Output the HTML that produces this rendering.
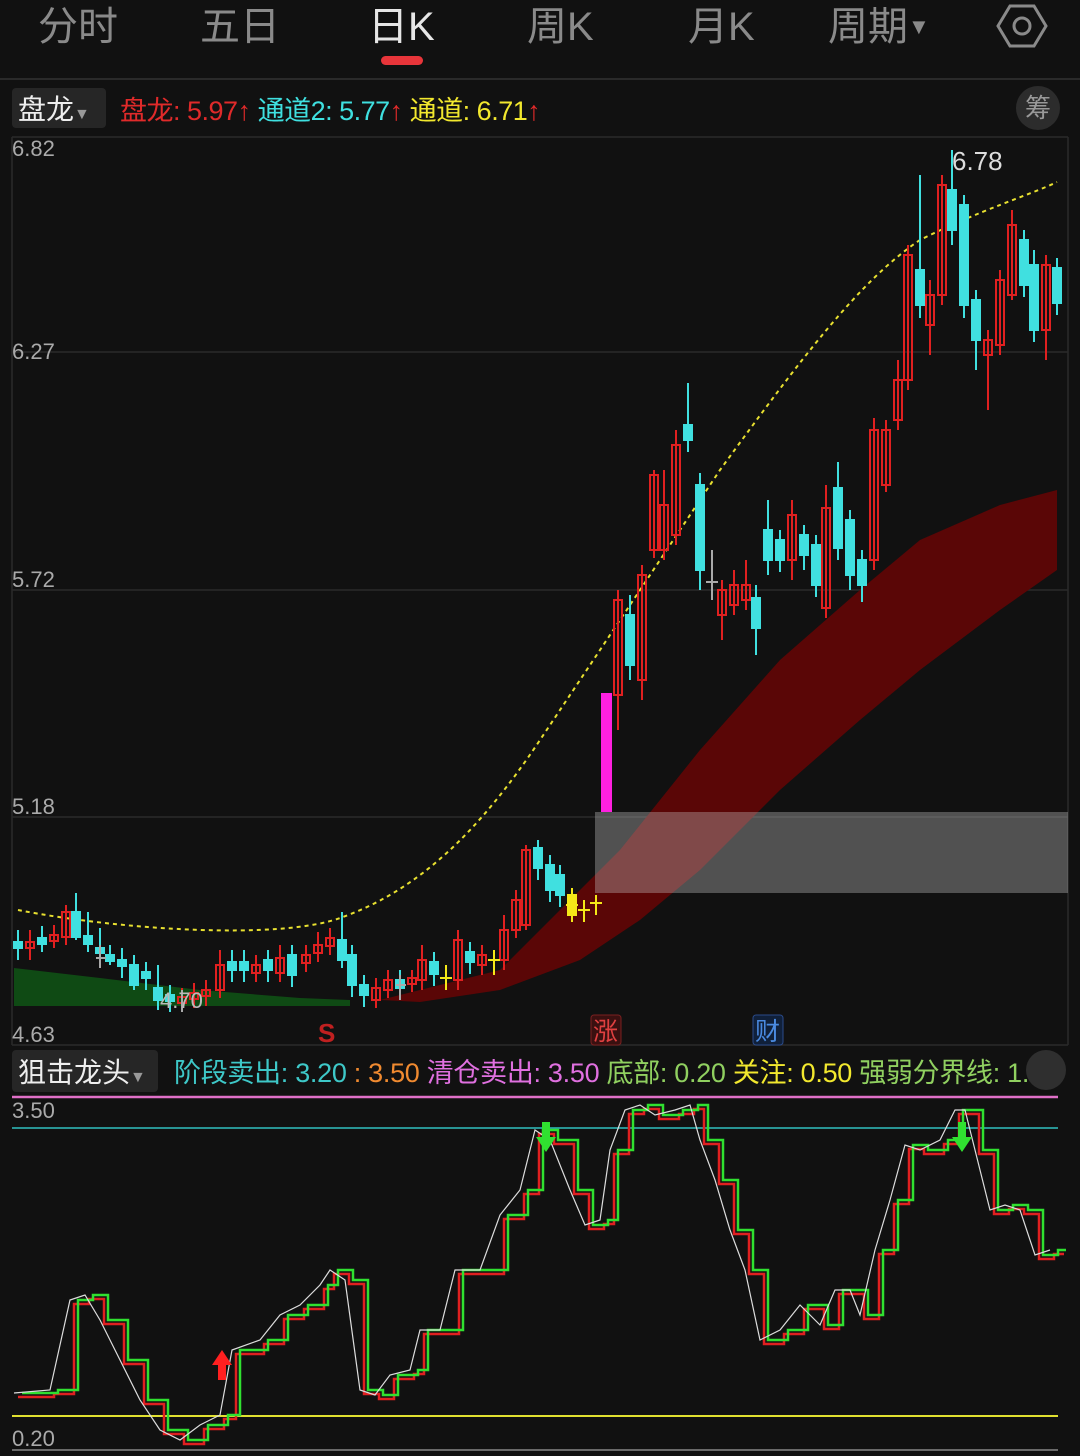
<!DOCTYPE html>
<html><head><meta charset="utf-8"><style>
body{margin:0;background:#0f0f0f;width:1080px;height:1456px;overflow:hidden;font-family:"Liberation Sans","Noto Sans CJK SC",sans-serif;}
.t{position:absolute;white-space:nowrap}
</style></head><body>
<div style="position:relative;width:1080px;height:1456px;background:#111">
<div class="t" style="left:38px;top:-6px;font-size:40px;color:#8a8a8a">分时</div>
<div class="t" style="left:200px;top:-6px;font-size:40px;color:#8a8a8a">五日</div>
<div class="t" style="left:368px;top:-6px;font-size:40px;color:#e6e6e6">日K</div>
<div style="position:absolute;left:381px;top:56px;width:42px;height:9px;border-radius:5px;background:#e8353a"></div>
<div class="t" style="left:527px;top:-6px;font-size:40px;color:#8a8a8a">周K</div>
<div class="t" style="left:688px;top:-6px;font-size:40px;color:#8a8a8a">月K</div>
<div class="t" style="left:828px;top:-6px;font-size:40px;color:#8a8a8a">周期<span style="font-size:22px;vertical-align:6px">▼</span></div>
<svg style="position:absolute;left:996px;top:2px" width="52" height="48"><polygon points="14,4 38,4 50,24 38,44 14,44 2,24" fill="none" stroke="#8a8a8a" stroke-width="3"/><circle cx="26" cy="24" r="8" fill="none" stroke="#8a8a8a" stroke-width="3"/></svg>
<div style="position:absolute;left:0;top:78px;width:1080px;height:2px;background:#2a2a2a"></div>
<div style="position:absolute;left:12px;top:88px;width:94px;height:40px;background:#262626;border-radius:4px"></div>
<div class="t" style="left:18px;top:88px;font-size:28px;color:#eee">盘龙<span style="font-size:16px;color:#999">▼</span></div>
<div class="t" style="left:120px;top:89px;font-size:27px;letter-spacing:-0.5px"><span style="color:#e02a2a">盘龙: 5.97</span><span style="color:#e02a2a">↑</span> <span style="color:#3fe0e0">通道2: 5.77</span><span style="color:#e02a2a">↑</span> <span style="color:#f2e82e">通道: 6.71</span><span style="color:#e02a2a">↑</span></div>
<div style="position:absolute;left:1016px;top:86px;width:44px;height:44px;border-radius:22px;background:#2c2c2c;color:#999;font-size:26px;text-align:center;line-height:44px">筹</div>

<svg style="position:absolute;left:0;top:0" width="1080" height="1456">
<g stroke="#2a2a2a" stroke-width="1.5"><line x1="12" y1="137" x2="1068" y2="137"/><line x1="12" y1="352" x2="1068" y2="352"/><line x1="12" y1="590" x2="1068" y2="590"/><line x1="12" y1="817" x2="1068" y2="817"/><line x1="12" y1="1045" x2="1068" y2="1045"/><line x1="12" y1="137" x2="12" y2="1045"/><line x1="1068" y1="137" x2="1068" y2="1045"/></g>
<polygon points="14,968 100,978 200,990 300,998 350,1000 350,1006 14,1006" fill="#0f4a14"/>
<polygon points="380,1000 500,970 560,910 620,850 700,750 780,660 860,590 920,540 1000,505 1057,490 1057,570 1000,610 920,670 860,720 780,790 700,870 640,920 580,960 500,990 420,1002" fill="#5a0606"/>
<rect x="595" y="812" width="473" height="81" fill="rgba(200,200,200,0.35)"/>
<path d="M18 910 C120 930 280 940 340 918 C420 890 480 830 540 740 C600 650 660 560 720 470 C800 360 860 280 920 240 C980 210 1030 195 1057 182" fill="none" stroke="#e8e030" stroke-width="2" stroke-dasharray="4,4"/>
<rect x="601" y="693" width="11" height="119" fill="#ff20e0"/>
<g stroke-width="2">
<g stroke="#40e0e0" fill="#40e0e0">
<path d="M18 930V960M42 926V952M76 893V940M88 912V952M100 928V967M110 945V965M122 948V978M134 955V990M146 962V990M158 965V1010M170 985V1012M232 950V982M244 950V982M268 950V982M292 945V987M342 912V968M352 945V997M364 975V1007M400 970V1000M434 952V986M470 942V974M538 840V880M550 855V902M560 865V907M630 595V680M688 383V452M700 473V590M756 585V655M768 500V575M780 530V572M804 525V570M816 535V597M838 462V560M850 510V590M862 550V602M920 175V318M952 150V245M964 195V318M976 290V370M1024 230V297M1034 250V342M1057 258V315"/>
<rect x="14" y="942" width="8" height="6"/><rect x="38" y="938" width="8" height="6"/><rect x="72" y="912" width="8" height="25"/><rect x="84" y="936" width="8" height="8"/><rect x="96" y="948" width="8" height="5"/><rect x="106" y="955" width="8" height="6"/><rect x="118" y="960" width="8" height="6"/><rect x="130" y="965" width="8" height="20"/><rect x="142" y="972" width="8" height="6"/><rect x="154" y="988" width="8" height="12"/><rect x="166" y="995" width="8" height="6"/><rect x="228" y="962" width="8" height="8"/><rect x="240" y="962" width="8" height="8"/><rect x="264" y="960" width="8" height="10"/><rect x="288" y="955" width="8" height="20"/><rect x="338" y="940" width="8" height="20"/><rect x="348" y="955" width="8" height="30"/><rect x="360" y="985" width="8" height="10"/><rect x="396" y="980" width="8" height="8"/><rect x="430" y="962" width="8" height="12"/><rect x="466" y="952" width="8" height="10"/><rect x="534" y="848" width="8" height="20"/><rect x="546" y="865" width="8" height="25"/><rect x="556" y="875" width="8" height="20"/><rect x="626" y="615" width="8" height="50"/><rect x="684" y="425" width="8" height="15"/><rect x="696" y="485" width="8" height="85"/><rect x="752" y="598" width="8" height="30"/><rect x="764" y="530" width="8" height="30"/><rect x="776" y="540" width="8" height="20"/><rect x="800" y="535" width="8" height="20"/><rect x="812" y="545" width="8" height="40"/><rect x="834" y="488" width="8" height="60"/><rect x="846" y="520" width="8" height="55"/><rect x="858" y="560" width="8" height="25"/><rect x="916" y="270" width="8" height="35"/><rect x="948" y="190" width="8" height="40"/><rect x="960" y="205" width="8" height="100"/><rect x="972" y="300" width="8" height="40"/><rect x="1020" y="240" width="8" height="45"/><rect x="1030" y="265" width="8" height="65"/><rect x="1053" y="268" width="8" height="35"/>
</g>
<g stroke="#e02020" fill="none">
<path d="M30 930V960M54 925V948M66 905V945M182 988V1012M194 983V1008M206 980V1006M220 950V998M256 955V982M280 945V982M306 945V972M318 932V962M330 928V955M376 978V1008M388 970V998M412 970V992M422 945V990M458 930V990M482 945V975M504 915V970M516 890V938M526 845V930M618 590V730M642 565V700M654 470V558M664 470V560M676 430V545M722 580V640M734 570V615M746 560V610M792 500V580M826 485V618M874 418V570M886 420V492M898 360V430M908 245V390M930 280V355M942 175V305M988 330V410M1000 270V355M1012 210V300M1046 255V360"/>
<rect x="26" y="942" width="8" height="6"/><rect x="50" y="935" width="8" height="6"/><rect x="62" y="912" width="8" height="25"/><rect x="178" y="997" width="8" height="6"/><rect x="190" y="993" width="8" height="6"/><rect x="202" y="990" width="8" height="6"/><rect x="216" y="965" width="8" height="25"/><rect x="252" y="965" width="8" height="8"/><rect x="276" y="958" width="8" height="15"/><rect x="302" y="955" width="8" height="8"/><rect x="314" y="945" width="8" height="8"/><rect x="326" y="938" width="8" height="8"/><rect x="372" y="988" width="8" height="12"/><rect x="384" y="980" width="8" height="10"/><rect x="408" y="978" width="8" height="6"/><rect x="418" y="960" width="8" height="20"/><rect x="454" y="940" width="8" height="40"/><rect x="478" y="955" width="8" height="10"/><rect x="500" y="930" width="8" height="30"/><rect x="512" y="900" width="8" height="30"/><rect x="522" y="850" width="8" height="75"/><rect x="614" y="600" width="8" height="95"/><rect x="638" y="575" width="8" height="105"/><rect x="650" y="475" width="8" height="75"/><rect x="660" y="505" width="8" height="45"/><rect x="672" y="445" width="8" height="90"/><rect x="718" y="590" width="8" height="25"/><rect x="730" y="585" width="8" height="20"/><rect x="742" y="585" width="8" height="15"/><rect x="788" y="515" width="8" height="45"/><rect x="822" y="508" width="8" height="100"/><rect x="870" y="430" width="8" height="130"/><rect x="882" y="430" width="8" height="55"/><rect x="894" y="380" width="8" height="40"/><rect x="904" y="255" width="8" height="125"/><rect x="926" y="295" width="8" height="30"/><rect x="938" y="185" width="8" height="110"/><rect x="984" y="340" width="8" height="15"/><rect x="996" y="280" width="8" height="65"/><rect x="1008" y="225" width="8" height="70"/><rect x="1042" y="265" width="8" height="65"/>
</g>
<g stroke="#f5e818" fill="#f5e818"><path d="M446 965V990M440 978H452M494 950V975M488 960H500M572 888V922M584 900V922M596 895V915M566 905H578M578 910H590M590 903H602"/><rect x="568" y="895" width="8" height="20"/></g>
<g stroke="#aaa"><path d="M712 550V600M706 582H718M100 945V968M96 958H106M400 975V1000M396 985H406M182 990V1012"/></g>
</g>
<g font-size="22" fill="#aaa"><text x="12" y="156">6.82</text><text x="12" y="359">6.27</text><text x="12" y="587">5.72</text><text x="12" y="814">5.18</text><text x="12" y="1042">4.63</text></g>
<text x="952" y="170" font-size="26" fill="#ddd">6.78</text>
<text x="160" y="1008" font-size="22" fill="#bbb">4.70</text>
<text x="318" y="1042" font-size="26" fill="#c02020" font-weight="bold">S</text>
<rect x="591" y="1015" width="30" height="30" rx="3" fill="#3a1010" stroke="#7a2020"/><text x="593" y="1040" font-size="25" fill="#e04040">涨</text>
<rect x="753" y="1015" width="30" height="30" rx="3" fill="#10203a" stroke="#2a4a8a"/><text x="755" y="1040" font-size="25" fill="#4a8ae0">财</text>
<line x1="12" y1="1097" x2="1058" y2="1097" stroke="#e070c8" stroke-width="2.5"/>
<line x1="12" y1="1128" x2="1058" y2="1128" stroke="#30c0c0" stroke-width="1.5"/>
<line x1="12" y1="1416" x2="1058" y2="1416" stroke="#e0e030" stroke-width="2"/>
<line x1="12" y1="1450" x2="1058" y2="1450" stroke="#888" stroke-width="1.5"/>
<text x="12" y="1118" font-size="22" fill="#aaa">3.50</text><text x="12" y="1446" font-size="22" fill="#aaa">0.20</text>
<g fill="none" stroke-width="2.5">
<path transform="translate(4,4)" stroke="#e02020" d="M14 1393H50V1390H70V1300H85V1295H100V1320H120V1360H140V1400H160V1430H180V1440H200V1425H220V1415H232V1350H260V1340H280V1315H300V1305H320V1285H330V1270H345V1280H360V1390H375V1395H390V1375H410V1370H420V1330H440V1330H455V1270H480V1270H500V1215H520V1190H535V1130H550V1140H570V1190H585V1225H600V1220H610V1150H625V1110H640V1105H655V1115H675V1110H690V1105H700V1140H715V1180H730V1230H745V1270H760V1340H780V1330H800V1305H820V1325H835V1290H850V1290H860V1315H875V1250H890V1200H905V1145H920V1150H940V1140H955V1110H965V1110H975V1150H990V1210H1005V1205H1020V1210H1035V1255H1050V1250H1060"/>
<path transform="translate(8,0)" stroke="#30e030" d="M14 1393H50V1390H70V1300H85V1295H100V1320H120V1360H140V1400H160V1430H180V1440H200V1425H220V1415H232V1350H260V1340H280V1315H300V1305H320V1285H330V1270H345V1280H360V1390H375V1395H390V1375H410V1370H420V1330H440V1330H455V1270H480V1270H500V1215H520V1190H535V1130H550V1140H570V1190H585V1225H600V1220H610V1150H625V1110H640V1105H655V1115H675V1110H690V1105H700V1140H715V1180H730V1230H745V1270H760V1340H780V1330H800V1305H820V1325H835V1290H850V1290H860V1315H875V1250H890V1200H905V1145H920V1150H940V1140H955V1110H965V1110H975V1150H990V1210H1005V1205H1020V1210H1035V1255H1050V1250H1058"/>
<polyline stroke="#ddd" stroke-width="1.2" points="14,1393 50,1390 70,1300 85,1295 100,1320 120,1360 140,1400 160,1430 180,1440 200,1425 220,1415 232,1350 260,1340 280,1315 300,1305 320,1285 330,1270 345,1280 360,1390 375,1395 390,1375 410,1370 420,1330 440,1330 455,1270 480,1270 500,1215 520,1190 535,1130 550,1140 570,1190 585,1225 600,1220 610,1150 625,1110 640,1105 655,1115 675,1110 690,1105 700,1140 715,1180 730,1230 745,1270 760,1340 780,1330 800,1305 820,1325 835,1290 850,1290 860,1315 875,1250 890,1200 905,1145 920,1150 940,1140 955,1110 965,1110 975,1150 990,1210 1005,1205 1020,1210 1035,1255 1050,1250"/>
</g>
<polygon points="222,1350 212,1365 218,1365 218,1380 226,1380 226,1365 232,1365" fill="#ff2020"/>
<polygon points="546,1152 536,1137 542,1137 542,1122 550,1122 550,1137 556,1137" fill="#30e030"/>
<polygon points="962,1152 952,1137 958,1137 958,1122 966,1122 966,1137 972,1137" fill="#30e030"/>
</svg>
<div style="position:absolute;left:12px;top:1050px;width:146px;height:42px;background:#262626;border-radius:4px"></div>
<div class="t" style="left:18px;top:1051px;font-size:28px;color:#eee">狙击龙头<span style="font-size:16px;color:#999">▼</span></div>
<div class="t" style="left:174px;top:1051px;font-size:27px;letter-spacing:-0.3px"><span style="color:#3ec8c8">阶段卖出: 3.20</span> <span style="color:#f08a30">: 3.50</span> <span style="color:#e070e0">清仓卖出: 3.50</span> <span style="color:#90d060">底部: 0.20</span> <span style="color:#f2e82e">关注: 0.50</span> <span style="color:#90d060">强弱分界线: 1.</span></div>
<div style="position:absolute;left:1026px;top:1050px;width:40px;height:40px;border-radius:20px;background:rgba(60,60,60,0.7)"></div>
</div>
</body></html>
